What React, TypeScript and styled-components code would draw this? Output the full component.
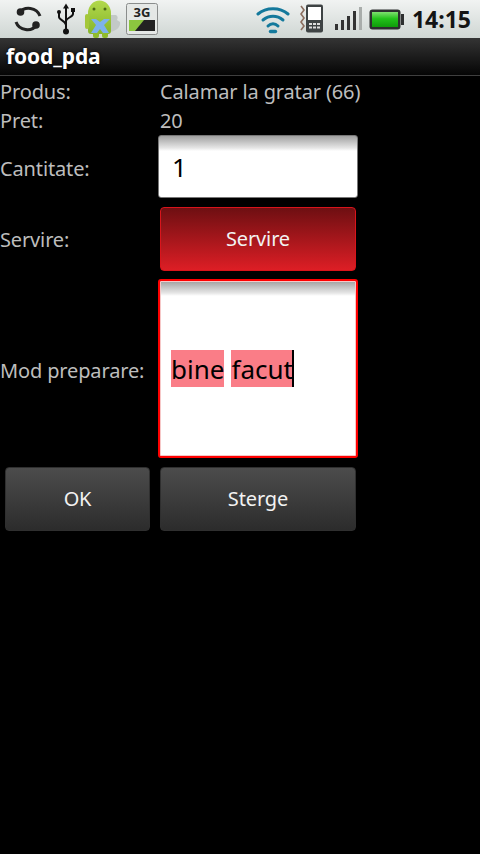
import React from "react";
import styled, { createGlobalStyle } from "styled-components";

const Global = createGlobalStyle`
  html, body { margin: 0; padding: 0; background: #000; }
  body { width: 480px; height: 854px; overflow: hidden; font-family: "Noto Sans", "Open Sans", sans-serif; }
`;
const Page = styled.div`width: 480px; height: 854px; background: #000; display: flex; flex-direction: column;`;
const StatusBar = styled.div`
  height: 38px; box-sizing: border-box; background: linear-gradient(#f1f3f2, #cfd6d3);
  display: flex; align-items: center; padding: 0 9px 0 14px; position: relative;
`;
const Slot = styled.div<{ $w: number; $ml: number }>`
  width: ${(p) => p.$w}px; margin-left: ${(p) => p.$ml}px; height: 38px; flex: none; display: flex; align-items: center;
`;
const Clock = styled.div`
  margin-left: auto; font: 700 23px "Noto Sans", sans-serif; color: #141414; line-height: 38px;
`;
const TitleBar = styled.div`
  height: 38px; box-sizing: border-box; background: linear-gradient(#343434, #050505);
  border-bottom: 1px solid #3f3f3f; color: #fff; font: 700 21px "Noto Sans", sans-serif;
  letter-spacing: -0.1px; line-height: 36px; padding-left: 6px; text-shadow: 0 0 3px #000;
`;
const Form = styled.div`
  display: grid; grid-template-columns: 158px 200px; grid-auto-rows: auto; padding-top: 1px; width: 358px;
`;
const Label = styled.div<{ $drop?: number }>`
  color: #bdbdbd; font-size: 20px; letter-spacing: -0.14px; display: flex; align-items: center; white-space: nowrap;
  padding-top: ${(p) => p.$drop ?? 0}px;
`;
const Value = styled(Label)`margin-left: 2px;`;
const TextRow = styled.div<{ $h: number }>`
  grid-column: 1 / 3; display: grid; grid-template-columns: 158px 200px; height: ${(p) => p.$h}px;
`;
const Input = styled.div<{ $focus?: boolean; $h: number }>`
  box-sizing: border-box; height: ${(p) => p.$h}px; border-radius: 3px;
  background: linear-gradient(#a0a0a0, #e6e6e6 12px, #fff 15px);
  border: ${(p) => (p.$focus ? "2px solid #ff0000" : "1px solid #777")};
  box-shadow: ${(p) => (p.$focus ? "inset 0 0 0 1px #f6c8c8" : "none")};
  color: #000; font-size: 26px; display: flex; align-items: center; padding-left: ${(p) => (p.$focus ? "11px" : "13px")};
  white-space: nowrap;
`;
const Hl = styled.span`background: #fa7d87; height: 37px; line-height: 39px; display: inline-block;`;
const Gap = styled.span`width: 7px; display: inline-block;`;
const Caret = styled.span`width: 2px; height: 37px; background: #000; margin-left: -1px;`;
const Btn = styled.div<{ $red?: boolean; $w: number }>`
  box-sizing: border-box; width: ${(p) => p.$w}px; height: 64px; border-radius: 4px; flex: none;
  background: ${(p) => (p.$red ? "linear-gradient(#6e0f12, #dd1e25)" : "linear-gradient(#4c4c4c, #2c2c2c)")};
  border: 1px solid ${(p) => (p.$red ? "#d8141b" : "#2f2f2f")};
  color: #f2f2f2; font-size: 20px; letter-spacing: -0.14px; display: flex; align-items: center; justify-content: center;
  padding-bottom: 1px;
`;
const BtnCell = styled.div`padding: 9px 0 8px 2px;`;
const ButtonRow = styled.div`display: flex; padding: 9px 0 0 5px; gap: 10px;`;

const Sync = () => (
  <svg width="28" height="28" viewBox="0 0 28 28" fill="none">
    <path d="M5 8A12 11.500 0 0 1 26 11" stroke="#222" strokeWidth="3" />
    <path d="M23 20A12 11.500 0 0 1 2 17" stroke="#222" strokeWidth="3" />
    <circle cx="6.500" cy="7" r="3.800" fill="#222" /><circle cx="22" cy="20" r="3.800" fill="#222" />
  </svg>
);
const Usb = () => (
  <svg width="20" height="32" viewBox="0 0 20 32" fill="none" stroke="#111" strokeWidth="2">
    <path d="M10 3V28M3 10v4c0 3 7 4 7 8M17 8v3c0 3-7 4-7 7" />
    <path d="M10 0.5l3 5h-6z" fill="#111" stroke="none" />
    <circle cx="3" cy="9" r="2" fill="#111" stroke="none" /><rect x="15" y="5" width="4" height="4" fill="#111" stroke="none" />
    <circle cx="10" cy="28.5" r="3" fill="#111" stroke="none" />
  </svg>
);
const Droid = () => (
  <svg width="38" height="38" viewBox="0 0 38 38">
    <defs>
      <linearGradient id="dg" x1="0" y1="0" x2="0" y2="1"><stop offset="0" stopColor="#b2d94c" /><stop offset="1" stopColor="#86b52a" /></linearGradient>
    </defs>
    <path d="M25 15l6 0c2 1 2 3 1 5l3 2c1 4-3 9-10 10z" fill="#c3c9c6" />
    <path d="M3 13A11 12 0 0 1 26 13V31a3 3 0 0 1-3 3H6a3 3 0 0 1-3-3z" fill="url(#dg)" />
    <rect x="0" y="14" width="4" height="15" rx="2" fill="#a4c739" />
    <rect x="8" y="31" width="6" height="7" rx="2" fill="#8fbb2c" /><rect x="17" y="31" width="6" height="7" rx="2" fill="#8fbb2c" />
    <circle cx="9" cy="9" r="1.500" fill="#4c6b15" /><circle cx="20" cy="9" r="1.500" fill="#4c6b15" />
    <path d="M6 19h5l4 3 4-3h6l-6 6 5 8h-6l-3-4-3 4H6l5-8z" fill="#7db2ec" />
  </svg>
);
const ThreeG = () => (
  <svg width="32" height="32" viewBox="0 0 32 32">
    <rect x="0.5" y="0.5" width="31" height="31" rx="2" fill="#e5e8e6" stroke="#8a8d8c" />
    <text x="16" y="14" textAnchor="middle" fontFamily="Noto Sans" fontWeight="700" fontSize="13" fill="#222">3G</text>
    <rect x="3" y="17" width="26" height="11" fill="#222" />
    <path d="M3 17h15l-9 11H3z" fill="#8cc63f" />
  </svg>
);
const Wifi = () => (
  <svg width="34" height="30" viewBox="0 0 34 30" fill="none" stroke="#14799c" strokeWidth="3" strokeLinecap="round">
    <path d="M2 10C10 3 24 3 32 10" /><path d="M7 16C13 11 21 11 27 16" /><path d="M12 22C15 19 19 19 22 22" />
    <path d="M14.5 27.5h5" strokeWidth="3.4" />
  </svg>
);
const Phone = () => (
  <svg width="26" height="30" viewBox="0 0 26 30">
    <path d="M3 2l3 4-3 4 3 4-3 4 3 4-3 4" fill="none" stroke="#8c6f60" strokeWidth="1.6" />
    <rect x="8" y="0.5" width="17" height="28" rx="2" fill="#3e4344" />
    <rect x="10" y="3" width="13" height="13" fill="#fff" />
    <path d="M11 19h3v2h-3zM15 19h3v2h-3zM19 19h3v2h-3zM11 22.500h3v2h-3zM15 22.500h3v2h-3zM19 22.500h3v2h-3z" fill="#ddd" />
  </svg>
);
const Signal = () => (
  <svg width="28" height="24" viewBox="0 0 28 24">
    <rect x="0" y="17" width="3" height="6" fill="#333" /><rect x="6" y="13" width="3" height="10" fill="#333" />
    <rect x="12" y="9" width="3" height="14" fill="#333" /><rect x="18" y="4" width="3" height="19" fill="#333" />
    <rect x="24" y="0" width="3" height="23" fill="#a9adab" />
  </svg>
);
const Battery = () => (
  <svg width="35" height="21" viewBox="0 0 35 21">
    <rect x="0.5" y="0.5" width="31" height="20" rx="3" fill="#2d2f2f" />
    <rect x="32" y="5" width="3" height="11" fill="#2d2f2f" />
    <defs><linearGradient id="g" x1="0" y1="0" x2="0" y2="1"><stop offset="0" stopColor="#7fe070" /><stop offset="0.45" stopColor="#22c21a" /><stop offset="1" stopColor="#0f9c0b" /></linearGradient></defs>
    <rect x="3" y="3" width="26" height="15" fill="url(#g)" />
  </svg>
);

export default function App() {
  return (
    <Page>
      <Global />
      <StatusBar>
        <Slot $w={28} $ml={0}><Sync /></Slot>
        <Slot $w={20} $ml={14}><Usb /></Slot>
        <Slot $w={38} $ml={9}><Droid /></Slot>
        <Slot $w={32} $ml={3}><ThreeG /></Slot>
        <Slot $w={34} $ml={98}><Wifi /></Slot>
        <Slot $w={26} $ml={8}><Phone /></Slot>
        <Slot $w={28} $ml={11}><Signal /></Slot>
        <Slot $w={35} $ml={6}><Battery /></Slot>
        <Clock>14:15</Clock>
      </StatusBar>
      <TitleBar>food_pda</TitleBar>
      <Form>
        <TextRow $h={28}><Label>Produs:</Label><Value>Calamar la gratar (66)</Value></TextRow>
        <TextRow $h={30}><Label>Pret:</Label><Value>20</Value></TextRow>
        <Label $drop={4}>Cantitate:</Label>
        <Input $h={63}>1</Input>
        <Label $drop={1}>Servire:</Label>
        <BtnCell><Btn $red $w={196}>Servire</Btn></BtnCell>
        <Label $drop={3}>Mod preparare:</Label>
        <Input $focus $h={179}>
          <Hl>bine</Hl><Gap /><Hl>facut</Hl><Caret />
        </Input>
      </Form>
      <ButtonRow>
        <Btn $w={145}>OK</Btn>
        <Btn $w={196}>Sterge</Btn>
      </ButtonRow>
    </Page>
  );
}
